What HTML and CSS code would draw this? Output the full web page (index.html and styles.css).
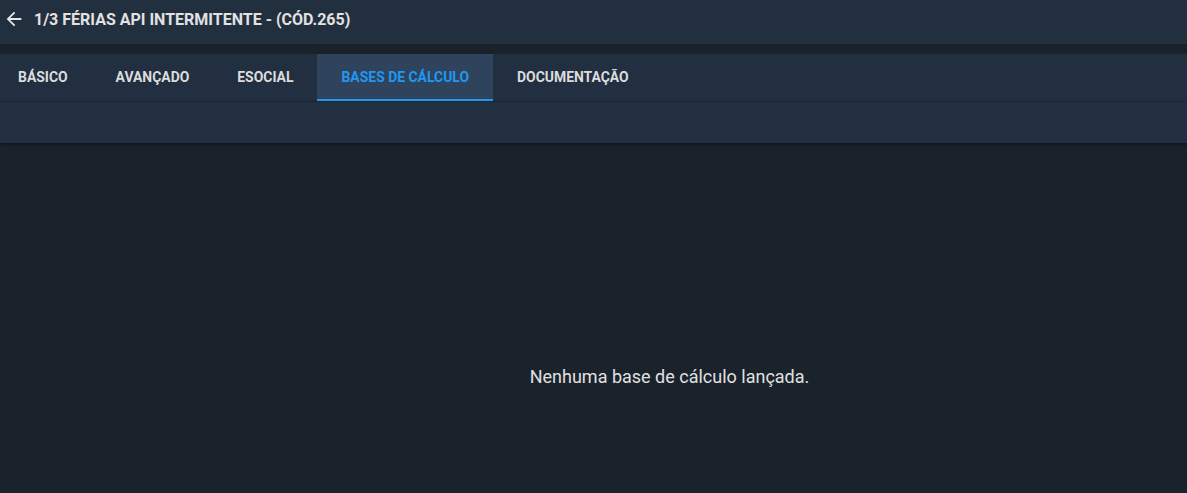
FILE: index.html
```html
<!DOCTYPE html>
<html lang="pt-BR">
<head>
    <meta charset="UTF-8">
    <meta name="viewport" content="width=device-width, initial-scale=1.0">
    <title>Férias API Intermitente</title>
    <link rel="stylesheet" href="styles.css">
</head>
<body>
    <header class="topbar">
        <button class="back">
            <svg width="22" height="22" viewBox="0 0 24 24"><path d="M20 11H7.83l5.59-5.59L12 4l-8 8 8 8 1.41-1.41L7.83 13H20v-2z" fill="#e6e6e6"/></svg>
        </button>
        <h1 class="title">1/3 FÉRIAS API INTERMITENTE - (CÓD.265)</h1>
    </header>

    <div class="gap"></div>

    <nav class="tabs">
        <div class="tab">BÁSICO</div>
        <div class="tab">AVANÇADO</div>
        <div class="tab">ESOCIAL</div>
        <div class="tab active">BASES DE CÁLCULO</div>
        <div class="tab">DOCUMENTAÇÃO</div>
    </nav>
    <div class="toolbar"></div>

    <main class="content">
        <p class="empty">Nenhuma base de cálculo lançada.</p>
    </main>
</body>
</html>
```

FILE: styles.css
```css
html, body {
    margin: 0;
    padding: 0;
    height: 100%;
}
body {
    background: #1a222c;
    font-family: Roboto, "Noto Sans", sans-serif;
    color: #e2e2e2;
    overflow: hidden;
}
.topbar {
    height: 44px;
    background: #222f3f;
    display: flex;
    align-items: center;
    padding-left: 3px;
    box-shadow: 0 1px 3px rgba(0, 0, 0, 0.4);
}
.back {
    background: none;
    border: none;
    padding: 0;
    width: 22px;
    height: 22px;
    display: flex;
    align-items: center;
    justify-content: center;
    margin-top: -6px;
}
.title {
    margin: -6px 0 0 9px;
    font-size: 16px;
    font-weight: 700;
    color: #e2e2e2;
}
.gap {
    height: 10px;
    background: #19212b;
}
.tabs {
    height: 48px;
    background: #212f40;
    display: flex;
    border-bottom: 1px solid #1c2836;
    box-sizing: border-box;
}
.tab {
    padding: 0 24px;
    display: flex;
    align-items: center;
    font-size: 13.93px;
    font-weight: 700;
    color: #dcdcdc;
    box-sizing: border-box;
    border-bottom: 2px solid transparent;
}
.tab:first-child {
    margin-left: -6px;
}
.tab.active {
    background: #2f445c;
    color: #2196f3;
    border-bottom-color: #2196f3;
}
.toolbar {
    height: 41px;
    background: #212f40;
    box-shadow: 0 2px 3px rgba(0, 0, 0, 0.35);
}
.content {
    padding-left: 152px;
    text-align: center;
}
.empty {
    margin: 0;
    padding-top: 223px;
    font-size: 18px;
    color: #e0e0e0;
}
```
